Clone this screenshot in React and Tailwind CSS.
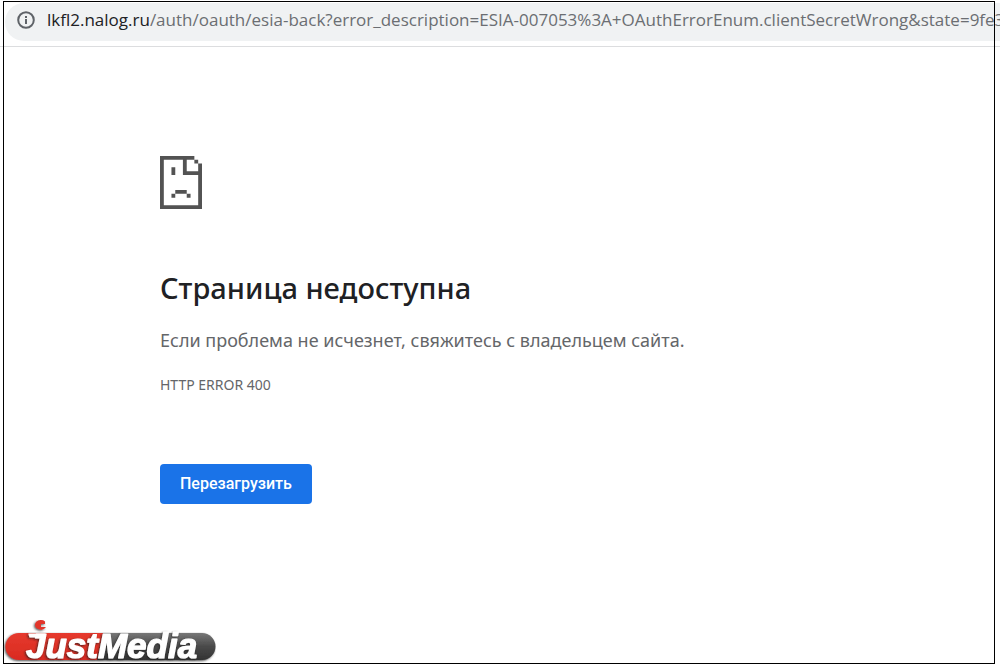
function InfoIcon() {
  return (
    <svg className="size-5 shrink-0" viewBox="0 0 20 20" fill="none" aria-hidden="true">
      <circle cx="10" cy="10" r="7.8" stroke="#5f6368" strokeWidth="2" />
      <path d="M9 9h2v5H9zM9 6h2v2H9z" fill="#5f6368" />
    </svg>
  );
}

function SadPageIcon() {
  return (
    <svg className="h-[53px] w-[42px]" viewBox="0 0 11 14" preserveAspectRatio="none" aria-hidden="true">
      <path
        fill="#535353"
        d="M0 0h9v1H7v3h3V2h1v12H0zM1 1v12h9V5H6V1zM9 1h1v1H9zM3 3h1v2H3zM4 9h3v1H4zM3 10h1v1H3zM7 10h1v1H7z"
        fillRule="evenodd"
      />
    </svg>
  );
}

function Logo() {
  return (
    <svg className="h-[46px] w-[216px]" viewBox="0 0 216 46" role="img" aria-label="JustMedia">
      <defs>
        <linearGradient id="grey" x1="0" y1="0" x2="0" y2="1">
          <stop offset="0" stopColor="#777" />
          <stop offset="0.5" stopColor="#4a4a4a" />
          <stop offset="1" stopColor="#333" />
        </linearGradient>
        <linearGradient id="red" x1="0" y1="0" x2="0" y2="1">
          <stop offset="0" stopColor="#e63a2e" />
          <stop offset="1" stopColor="#d92a20" />
        </linearGradient>
        <filter id="shade" x="-10%" y="-20%" width="120%" height="150%">
          <feDropShadow dx="-1" dy="1" stdDeviation="0.8" floodColor="#222" floodOpacity="0.8" />
        </filter>
      </defs>
      <g filter="url(#shade)">
        <path d="M101 13H202a13.500 13.500 0 0 1 0 27H96z" fill="url(#grey)" />
        <path d="M19 13H103L97 40H19a13.500 13.500 0 0 1 0-27z" fill="url(#red)" />
        <path d="M45 1.500a5.800 4.800 0 1 0 1 5.500h-5v-3h4z" fill="#e2342a" />
      </g>
      <g
        filter="url(#shade)"
        fill="#fff"
        stroke="#fff"
        strokeWidth="1.2"
        strokeLinejoin="round"
        fontFamily="'Liberation Sans', sans-serif"
        fontStyle="italic"
        fontWeight="700"
      >
        <path d="M29 14h16l-1 3h-14z" />
        <text x="26" y="38" fontSize="35">JustMedia</text>
      </g>
    </svg>
  );
}

export default function App() {
  return (
    <div className="relative flex min-h-screen flex-col overflow-hidden bg-white font-['Noto_Sans','Open_Sans',sans-serif]">
      <header className="border-b border-[#dcdddf] pt-[3px] pb-[5px] pl-[5px]">
        <div className="flex h-[38px] items-center gap-[11px] overflow-hidden rounded-l-full bg-[#f0f2f3] pb-1 pl-[11px] font-['Open_Sans','Noto_Sans',sans-serif] text-[17px] leading-6 whitespace-nowrap">
          <InfoIcon />
          <p className="text-[#6b6e72]">
            <span className="text-[#202124]">lkfl2.nalog.ru</span>
            /auth/oauth/esia-back?error_description=ESIA-007053%3A+OAuthErrorEnum.clientSecretWrong&amp;state=9fe37
          </p>
        </div>
      </header>

      <main className="flex flex-1 flex-col items-start px-40 pt-[109px] pb-40">
        <SadPageIcon />
        <h1 className="mt-[59px] text-[29px] leading-10 font-medium text-[#202124]">Страница недоступна</h1>
        <p className="mt-5 text-lg leading-6 text-[#646669]">
          Если проблема не исчезнет, свяжитесь с владельцем сайта.
        </p>
        <p className="mt-[21px] text-sm leading-6 text-[#646669]">HTTP ERROR 400</p>
        <button
          type="button"
          className="mt-[67px] h-10 rounded bg-[#1a73e8] px-5 font-[Roboto,sans-serif] text-base font-medium text-white"
        >
          Перезагрузить
        </button>
      </main>

      <div className="pointer-events-none absolute top-px right-[5px] bottom-[2px] left-[3px] border border-black" />
      <div className="absolute bottom-0 left-0">
        <Logo />
      </div>
    </div>
  );
}
